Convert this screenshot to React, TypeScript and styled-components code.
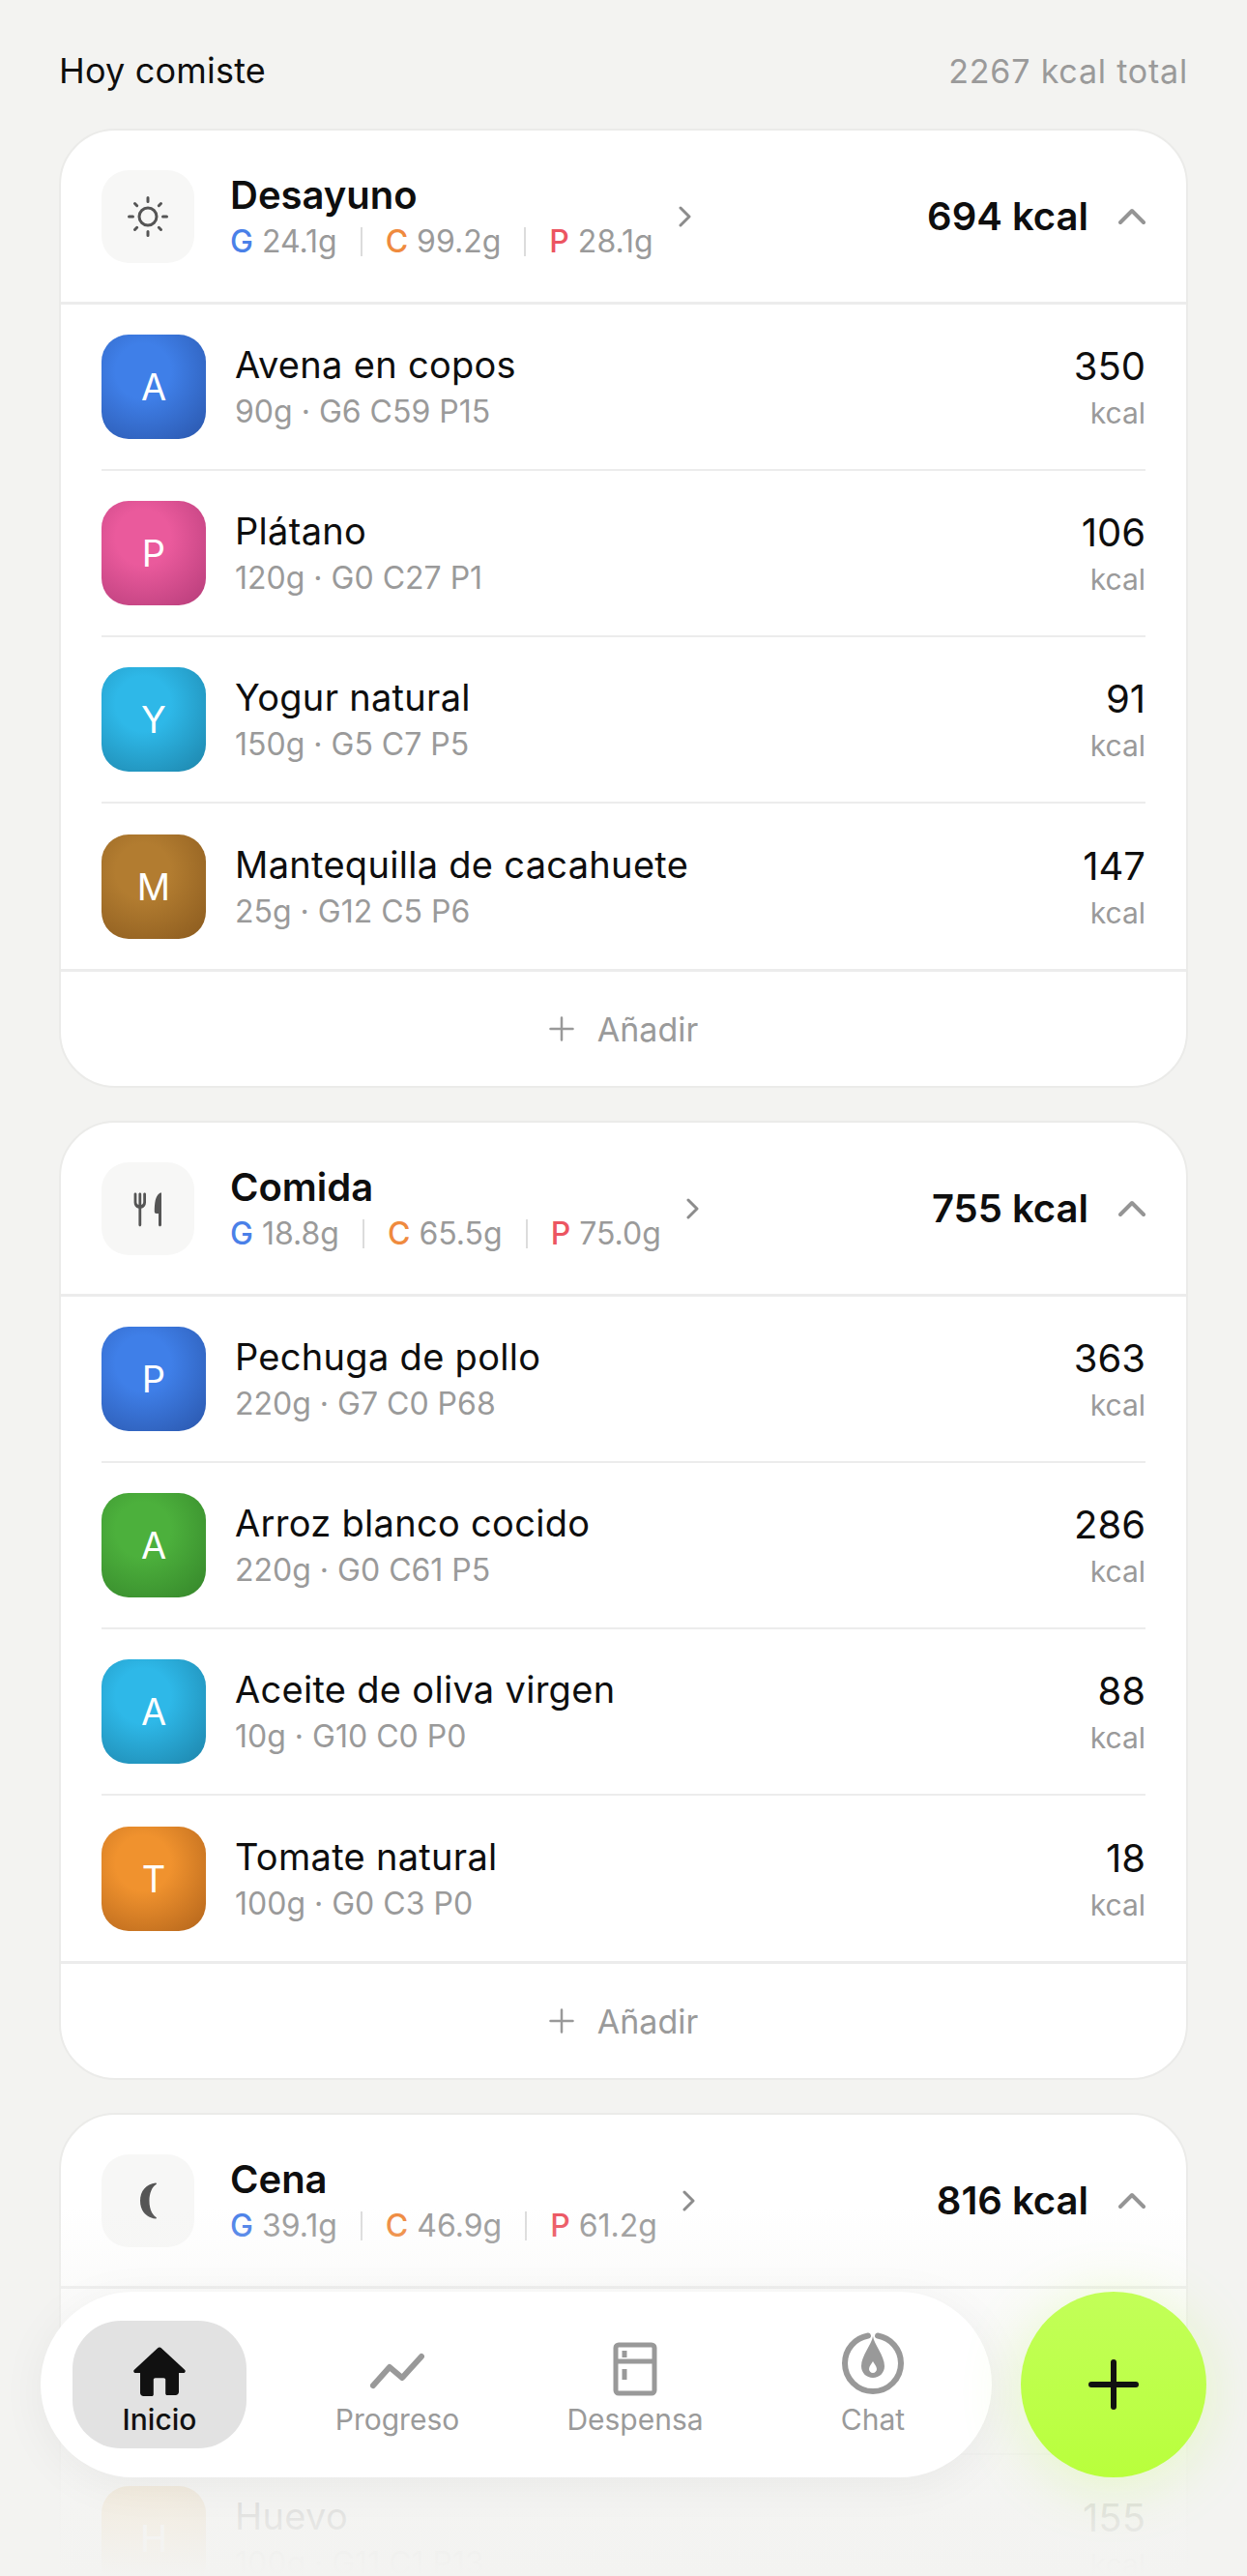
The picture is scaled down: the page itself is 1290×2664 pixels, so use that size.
import styled, { createGlobalStyle } from 'styled-components';

const GlobalStyle = createGlobalStyle`
  html, body {
    margin: 0;
    padding: 0;
    background: #f3f3f1;
  }
  body {
    font-family: Inter, "Liberation Sans", sans-serif;
    color: #0e0e0e;
  }
`;

type Food = { name: string; detail: string; kcal: number; tone: string; edge: string };
type Meal = {
  title: string;
  icon: 'sun' | 'fork' | 'moon';
  fat: string;
  carbs: string;
  protein: string;
  kcal: number;
  foods: Food[];
};

const BLUE = ['#3f7fe8', '#2a56ab'];
const PINK = ['#ea5a9c', '#b53c79'];
const CYAN = ['#2eb8e8', '#1d84aa'];
const BROWN = ['#b27c30', '#8a5a1e'];
const GREEN = ['#4cb03c', '#35852a'];
const ORANGE = ['#f0922e', '#b2641b'];
const AMBER = ['#eda93c', '#c4832a'];

const food = (name: string, detail: string, kcal: number, c: string[]): Food => ({
  name,
  detail,
  kcal,
  tone: c[0],
  edge: c[1],
});

const meals: Meal[] = [
  {
    title: 'Desayuno',
    icon: 'sun',
    fat: '24.1g',
    carbs: '99.2g',
    protein: '28.1g',
    kcal: 694,
    foods: [
      food('Avena en copos', '90g · G6 C59 P15', 350, BLUE),
      food('Plátano', '120g · G0 C27 P1', 106, PINK),
      food('Yogur natural', '150g · G5 C7 P5', 91, CYAN),
      food('Mantequilla de cacahuete', '25g · G12 C5 P6', 147, BROWN),
    ],
  },
  {
    title: 'Comida',
    icon: 'fork',
    fat: '18.8g',
    carbs: '65.5g',
    protein: '75.0g',
    kcal: 755,
    foods: [
      food('Pechuga de pollo', '220g · G7 C0 P68', 363, BLUE),
      food('Arroz blanco cocido', '220g · G0 C61 P5', 286, GREEN),
      food('Aceite de oliva virgen', '10g · G10 C0 P0', 88, CYAN),
      food('Tomate natural', '100g · G0 C3 P0', 18, ORANGE),
    ],
  },
  {
    title: 'Cena',
    icon: 'moon',
    fat: '39.1g',
    carbs: '46.9g',
    protein: '61.2g',
    kcal: 816,
    foods: [
      food('Salmón', '150g · G20 C0 P30', 312, PINK),
      food('Huevo', '100g · G11 C1 P13', 155, AMBER),
    ],
  },
];

function MealIcon({ kind }: { kind: Meal['icon'] }) {
  if (kind === 'sun') {
    return (
      <svg width="44" height="44" viewBox="0 0 44 44" fill="none" stroke="#555" strokeWidth="3" strokeLinecap="round">
        <circle cx="22" cy="22" r="9" />
        <path d="M22 2.5v4M22 37.5v4M2.5 22h4M37.500 22h4M8.500 8.500l2.200 2.200M33.300 33.300l2.200 2.200M8.500 35.500l2.200-2.200M33.300 10.700l2.200-2.200" />
      </svg>
    );
  }
  if (kind === 'fork') {
    return (
      <svg width="44" height="44" viewBox="0 0 44 44" fill="#555">
        <path d="M9 5.500c.8 0 1.400.6 1.400 1.400v8.100c0 1.600.7 2.600 2 3V6.900c0-.8.6-1.400 1.400-1.400s1.400.6 1.400 1.400V18c1.300-.4 2-1.400 2-3V6.900c0-.8.6-1.400 1.400-1.400s1.400.6 1.400 1.400v8.700c0 3.400-1.700 5.500-4.800 6.200v16.900c0 .9-.6 1.500-1.400 1.500s-1.400-.6-1.400-1.500V21.800C9.300 21.100 7.600 19 7.600 15.600V6.900c0-.8.6-1.400 1.400-1.400z" />
        <path d="M36 5.500v33.200c0 .9-.6 1.500-1.500 1.500s-1.500-.6-1.500-1.500V27h-2.200c-1.300 0-2-.8-2-2 0-8.500.9-16.500 5.300-19.100.8-.5 1.900-.6 1.900-.4z" />
      </svg>
    );
  }
  return (
    <svg width="44" height="44" viewBox="0 0 44 44" fill="#555">
      <path d="M30 3.500C20 4.500 14 12 14 22s6 17.500 16 18.500c1 .1 1.300-.9.500-1.500-4.500-3-7-9-7-17s2.500-14 7-17c.8-.6.500-1.600-.5-1.500z" />
    </svg>
  );
}

export default function App() {
  return (
    <Screen>
      <GlobalStyle />
      <Content>
        <TopRow>
          <TopTitle>Hoy comiste</TopTitle>
          <TopTotal>2267 kcal total</TopTotal>
        </TopRow>
        {meals.map((meal) => (
          <Card key={meal.title}>
            <CardHeader>
              <IconBox>
                <MealIcon kind={meal.icon} />
              </IconBox>
              <HeaderText>
                <MealTitle>{meal.title}</MealTitle>
                <Macros>
                  <Macro>
                    <MacroKey $color="#4a80e8">G</MacroKey> {meal.fat}
                  </Macro>
                  <MacroBar />
                  <Macro>
                    <MacroKey $color="#ef8a3e">C</MacroKey> {meal.carbs}
                  </Macro>
                  <MacroBar />
                  <Macro>
                    <MacroKey $color="#ec5561">P</MacroKey> {meal.protein}
                  </Macro>
                </Macros>
              </HeaderText>
              <Caret width="14" height="24" viewBox="0 0 14 24" fill="none">
                <path d="M2 3l9 9-9 9" />
              </Caret>
              <MealKcal>{meal.kcal} kcal</MealKcal>
              <Collapse width="28" height="18" viewBox="0 0 28 18" fill="none">
                <path d="M2 15L14 3l12 12" />
              </Collapse>
            </CardHeader>
            <FoodList>
              {meal.foods.map((f) => (
                <FoodRow key={f.name}>
                  <Avatar $tone={f.tone} $edge={f.edge}>
                    {f.name[0]}
                  </Avatar>
                  <FoodText>
                    <FoodName>{f.name}</FoodName>
                    <FoodDetail>{f.detail}</FoodDetail>
                  </FoodText>
                  <FoodKcal>
                    <KcalValue>{f.kcal}</KcalValue>
                    <KcalUnit>kcal</KcalUnit>
                  </FoodKcal>
                </FoodRow>
              ))}
            </FoodList>
            <AddRow>
              <svg width="26" height="26" viewBox="0 0 26 26" fill="none" stroke="#999" strokeWidth="2.500" strokeLinecap="round">
                <path d="M13 1.500v23M1.500 13h23" />
              </svg>
              <AddLabel>Añadir</AddLabel>
            </AddRow>
          </Card>
        ))}
      </Content>

      <BottomFade />
      <BottomBar>
        <Nav>
          <Tab $active>
            <svg width="56" height="52" viewBox="0 0 56 52" fill="#111">
              <path d="M28 1.500c.8 0 1.500.3 2.100.9l24 22.300c1.300 1.200.5 3.300-1.300 3.300H48v19.500c0 2-1.500 3.500-3.500 3.500H36c-1 0-1.800-.8-1.800-1.800V35c0-1-.8-1.800-1.800-1.800h-8.800c-1 0-1.800.8-1.800 1.800v15.200c0 1-.8 1.800-1.800 1.800h-8.500c-2 0-3.500-1.500-3.500-3.500V28H3.200c-1.800 0-2.600-2.100-1.300-3.300l24-22.300c.6-.6 1.300-.9 2.100-.9z" />
            </svg>
            <TabLabel $active>Inicio</TabLabel>
          </Tab>
          <Tab>
            <svg width="56" height="52" viewBox="0 0 56 52" fill="none" stroke="#999" strokeWidth="6" strokeLinecap="round" strokeLinejoin="round">
              <path d="M3 41l17-19 13 11L53 11" />
            </svg>
            <TabLabel>Progreso</TabLabel>
          </Tab>
          <Tab>
            <svg width="46" height="56" viewBox="0 0 46 56" fill="none" stroke="#999" strokeWidth="5" strokeLinejoin="round">
              <rect x="3" y="3" width="40" height="50" rx="3" />
              <path d="M3 20h40M12 9v7M12 28v11" />
            </svg>
            <TabLabel>Despensa</TabLabel>
          </Tab>
          <Tab>
            <svg width="68" height="68" viewBox="0 0 68 68" fill="none">
              <path d="M29 5.500C15.500 7.800 5 19.600 5 34c0 16 13 29 29 29s29-13 29-29C63 19.600 52.500 7.800 39 5.500" stroke="#999" strokeWidth="6" strokeLinecap="round" />
              <path fillRule="evenodd" fill="#999" d="M34 6c1 8 12 20 12 31 0 7-5.400 12-12 12s-12-5-12-12C22 26 33 14 34 6zm0 26c-1.500 2.500-4 5.500-4 8 0 2.200 1.800 4 4 4s4-1.800 4-4c0-2.500-2.500-5.500-4-8z" />
            </svg>
            <TabLabel>Chat</TabLabel>
          </Tab>
        </Nav>
        <Fab>
          <svg width="52" height="52" viewBox="0 0 52 52" fill="none" stroke="#111" strokeWidth="6" strokeLinecap="round">
            <path d="M26 3v46M3 26h46" />
          </svg>
        </Fab>
      </BottomBar>
    </Screen>
  );
}

const Screen = styled.div`
  position: relative;
  width: 1290px;
  height: 2664px;
  overflow: hidden;
  background: #f3f3f1;
`;

const Content = styled.main`
  display: flex;
  flex-direction: column;
  gap: 34px;
  padding: 47px 61px 0;
`;

const TopRow = styled.header`
  display: flex;
  align-items: center;
  justify-content: space-between;
  height: 52px;
  margin-bottom: 0;
`;

const TopTitle = styled.h2`
  margin: 0;
  font-size: 36px;
  font-weight: 400;
  letter-spacing: 0.2px;
`;

const TopTotal = styled.span`
  font-size: 34px;
  color: #9a9a9a;
  letter-spacing: 0.8px;
`;

const Card = styled.section`
  flex: none;
  background: #fff;
  border: 2px solid #ebebe9;
  border-radius: 58px;
  overflow: hidden;
`;

const CardHeader = styled.div`
  display: flex;
  align-items: center;
  height: 177px;
  padding: 0 42px 0 42px;
  border-bottom: 3px solid #ececec;
`;

const IconBox = styled.div`
  flex: none;
  width: 96px;
  height: 96px;
  border-radius: 28px;
  background: #f7f7f6;
  display: flex;
  align-items: center;
  justify-content: center;
`;

const HeaderText = styled.div`
  margin-left: 37px;
  display: flex;
  flex-direction: column;
  gap: 5px;
`;

const MealTitle = styled.h3`
  margin: 0;
  font-size: 40px;
  line-height: 48px;
  font-weight: 600;
`;

const Macros = styled.div`
  display: flex;
  align-items: center;
  font-size: 32px;
  line-height: 38px;
  color: #9a9a9a;
`;

const Macro = styled.span`
  white-space: nowrap;
`;

const MacroKey = styled.b<{ $color: string }>`
  font-weight: 500;
  color: ${(p) => p.$color};
`;

const MacroBar = styled.i`
  width: 2px;
  height: 30px;
  margin: 0 24px;
  background: #dcdcdc;
`;

const Caret = styled.svg`
  flex: none;
  margin-left: 26px;
  stroke: #8c8c8c;
  stroke-width: 3;
  stroke-linecap: round;
  stroke-linejoin: round;
`;

const MealKcal = styled.span`
  margin-left: auto;
  font-size: 40px;
  font-weight: 600;
  white-space: nowrap;
`;

const Collapse = styled.svg`
  flex: none;
  margin-left: 31px;
  stroke: #959595;
  stroke-width: 4;
  stroke-linecap: round;
  stroke-linejoin: round;
`;

const FoodList = styled.div`
  padding: 0 42px;
`;

const FoodRow = styled.div`
  display: flex;
  align-items: center;
  height: 170px;
  border-bottom: 2px solid #ececec;

  &:last-child {
    border-bottom: 0;
    height: 171px;
  }
`;

const Avatar = styled.div<{ $tone: string; $edge: string }>`
  flex: none;
  width: 108px;
  height: 108px;
  border-radius: 28px;
  display: flex;
  align-items: center;
  justify-content: center;
  font-size: 38px;
  color: #fff;
  background: radial-gradient(circle at 40% 35%, ${(p) => p.$tone} 0%, ${(p) => p.$tone} 30%, ${(p) => p.$edge} 100%);
`;

const FoodText = styled.div`
  margin-left: 30px;
  flex: 1;
  display: flex;
  flex-direction: column;
  gap: 6px;
`;

const FoodName = styled.div`
  font-size: 38px;
  line-height: 46px;
  letter-spacing: 0.3px;
`;

const FoodDetail = styled.div`
  font-size: 32px;
  line-height: 40px;
  color: #9a9a9a;
`;

const FoodKcal = styled.div`
  display: flex;
  flex-direction: column;
  align-items: flex-end;
  gap: 6px;
`;

const KcalValue = styled.span`
  font-size: 40px;
  line-height: 48px;
`;

const KcalUnit = styled.span`
  font-size: 30px;
  line-height: 36px;
  color: #9a9a9a;
`;

const AddRow = styled.div`
  display: flex;
  align-items: center;
  justify-content: center;
  gap: 24px;
  height: 118px;
  border-top: 3px solid #ececec;
`;

const AddLabel = styled.span`
  font-size: 34px;
  color: #9a9a9a;
`;

const BottomFade = styled.div`
  position: absolute;
  left: 0;
  right: 0;
  bottom: 0;
  height: 380px;
  background: linear-gradient(
    to bottom,
    rgba(243, 243, 241, 0) 0%,
    rgba(243, 243, 241, 0.55) 35%,
    rgba(243, 243, 241, 0.88) 70%,
    rgba(243, 243, 241, 1) 100%
  );
`;

const BottomBar = styled.div`
  position: absolute;
  left: 42px;
  bottom: 102px;
  display: flex;
  gap: 30px;
`;

const Nav = styled.nav`
  display: flex;
  gap: 66px;
  width: 984px;
  height: 192px;
  box-sizing: border-box;
  padding: 30px 33px;
  background: #fff;
  border-radius: 96px;
  box-shadow: 0 8px 48px rgba(0, 0, 0, 0.05);
`;

const Tab = styled.div<{ $active?: boolean }>`
  flex: none;
  width: 180px;
  height: 132px;
  border-radius: 50px;
  display: flex;
  flex-direction: column;
  align-items: center;
  justify-content: flex-end;
  gap: 6px;
  padding-bottom: 12px;
  box-sizing: border-box;
  background: ${(p) => (p.$active ? '#e2e2e2' : 'transparent')};
`;

const TabLabel = styled.span<{ $active?: boolean }>`
  font-size: 30px;
  line-height: 36px;
  color: ${(p) => (p.$active ? '#111' : '#9a9a9a')};
  font-weight: ${(p) => (p.$active ? 500 : 400)};
`;

const Fab = styled.div`
  flex: none;
  width: 192px;
  height: 192px;
  border-radius: 50%;
  background: linear-gradient(to bottom, #c2ff58, #b9ff3c);
  box-shadow: 0 8px 60px rgba(185, 255, 60, 0.25);
  display: flex;
  align-items: center;
  justify-content: center;
`;
